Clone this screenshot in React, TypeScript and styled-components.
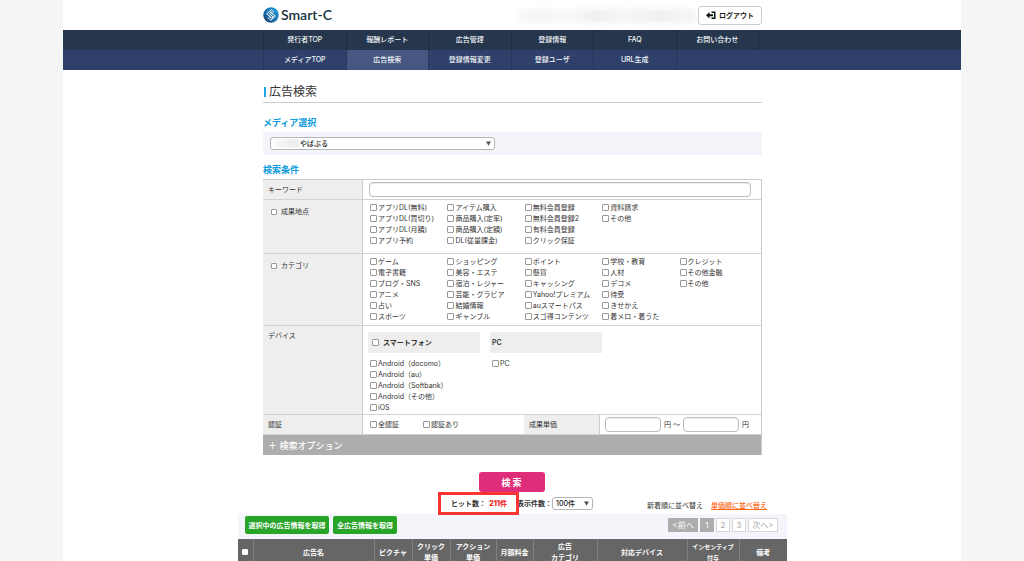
import React from "react";
import styled, { createGlobalStyle, css } from "styled-components";

const GlobalStyle = createGlobalStyle`
  *, *::before, *::after { box-sizing: border-box; }
  body {
    margin: 0;
    background: #f5f5f5;
    color: #333;
    font-family: Inter, "Noto Sans CJK JP", sans-serif;
    font-size: 7px;
    line-height: 11px;
  }
  button, input, select { font: inherit; color: inherit; margin: 0; }
  h1, h2, ul, fieldset { margin: 0; padding: 0; border: 0; min-width: 0; }
  ul { list-style: none; }
  a { color: inherit; text-decoration: none; }
`;

const Sheet = styled.div`
  max-width: 898px;
  min-height: 100vh;
  margin: 0 auto;
  background: #fff;
`;

const Container = styled.div<{ $wide?: boolean }>`
  max-width: ${(p) => (p.$wide ? 550 : 500)}px;
  margin: 0 auto;
  padding-left: 1px;
`;

const HeaderBar = styled.header`
  display: flex;
  align-items: center;
  height: 30px;
`;

const Logo = styled.a`
  display: flex;
  align-items: center;
  gap: 2px;
  color: #17323f;
  font-family: Lato, sans-serif;
  font-size: 14px;
  font-weight: 600;
  line-height: 18px;
`;

const AccountName = styled.div`
  width: 182px;
  height: 14px;
  margin: 2px 2px 0 auto;
  background: linear-gradient(90deg, #fcfcfc, #f5f5f5 12%, #f8f8f8 30%, #f0f0f0 44%, #f5f5f5 62%, #f0f0f0 80%, #f6f6f6);
  filter: blur(2px);
`;

const LogoutButton = styled.button`
  display: flex;
  align-items: center;
  justify-content: center;
  gap: 3px;
  width: 64px;
  height: 19px;
  padding: 0;
  border: 1px solid #ccc;
  border-radius: 3px;
  background: #fff;
  color: #222;
  font-weight: 600;
`;

const NavBar = styled.nav<{ $sub?: boolean }>`
  background: ${(p) => (p.$sub ? "#2f416b" : "#25364d")};
`;

const NavList = styled.ul`
  display: grid;
  grid-template-columns: repeat(6, 1fr);
  margin-right: 4px;
`;

const NavItem = styled.li<{ $sub?: boolean; $active?: boolean; $last?: boolean }>`
  border-left: 1px solid ${(p) => (p.$sub ? "#25365c" : "#1b2a40")};
  background: ${(p) => (p.$active ? "#465781" : "transparent")};
  ${(p) =>
    p.$last &&
    css`
      box-shadow: 1px 0 0 ${p.$sub ? "#25365c" : "#1b2a40"};
    `}
`;

const NavLink = styled.a`
  display: block;
  color: #f4f6fa;
  font-weight: 500;
  line-height: 20px;
  text-align: center;
`;

const PageTitle = styled.h1`
  display: flex;
  align-items: center;
  gap: 3px;
  margin: 14px 0 13px;
  padding: 0 0 2px 1px;
  border-bottom: 1px solid #ccc;
  font-size: 12px;
  font-weight: 400;
  line-height: 16px;

  &::before {
    content: "";
    width: 2px;
    height: 10px;
    background: #1aa5e3;
  }
`;

const SectionTitle = styled.h2`
  margin-bottom: 3px;
  color: #0c9bdc;
  font-size: 9px;
  font-weight: 600;
  line-height: 13px;
`;

const MediaPanel = styled.div`
  margin-bottom: 8px;
  padding: 5px 7px;
  background: #f4f5fa;
`;

const SelectWrap = styled.span<{ $width: number }>`
  position: relative;
  display: block;
  width: ${(p) => p.$width}px;

  svg {
    position: absolute;
    top: 4px;
    right: 4px;
    pointer-events: none;
  }
`;

const Select = styled.select<{ $indent: number }>`
  appearance: none;
  display: block;
  width: 100%;
  height: 13px;
  padding: 0 10px 0 ${(p) => p.$indent}px;
  border: 1px solid #b5b5b5;
  border-radius: 3px;
  background: #fff;
  color: #222;
  font-weight: 500;
  line-height: 11px;
`;

const MaskedName = styled.span`
  position: absolute;
  top: 2px;
  left: 4px;
  width: 25px;
  height: 9px;
  background: linear-gradient(90deg, #f8f8f8, #ebebeb);
  filter: blur(1px);
`;

const Conditions = styled.form`
  border-top: 1px solid #ccc;
  border-right: 1px solid #ccc;
`;

const Row = styled.div`
  display: grid;
  grid-template-columns: 100px 1fr;
  border-bottom: 1px solid #d2d2d2;
`;

const HeadCell = styled.div<{ $pad?: number; $indent?: number }>`
  padding: ${(p) => p.$pad ?? 4}px 0 0 ${(p) => p.$indent ?? 5}px;
  border-right: 1px solid #ccc;
  background: #eee;
`;

const KeywordCell = styled.div`
  padding: 2px 10px 2px 6px;
`;

const TextInput = styled.input<{ $width?: string }>`
  display: block;
  width: ${(p) => p.$width ?? "100%"};
  height: 15px;
  padding: 0 4px;
  border: 1px solid #bdbdbd;
  border-radius: 4px;
  background: #fff;
  box-shadow: inset 0 1px 1px #eee;
`;

const OptionGrid = styled.fieldset<{ $bottom: number }>`
  display: grid;
  grid-template-columns: repeat(5, 1fr);
  padding: 2px 4px ${(p) => p.$bottom}px 7px;
`;

const CheckLabel = styled.label<{ $gap?: number; $bold?: boolean }>`
  display: flex;
  align-items: center;
  gap: ${(p) => p.$gap ?? 1}px;
  font-weight: ${(p) => (p.$bold ? 600 : 400)};
  white-space: nowrap;
`;

const Box = styled.input.attrs({ type: "checkbox" })<{ $small?: boolean }>`
  appearance: none;
  flex: none;
  width: ${(p) => (p.$small ? 6 : 7)}px;
  height: ${(p) => (p.$small ? 6 : 7)}px;
  border: 1px solid #999;
  border-radius: 1px;
  background: #fff;

  &:checked { background: #2b7de9; }
`;

const DeviceCell = styled.div`
  display: flex;
  gap: 10px;
  padding: 6px 5px 1px;
`;

const DeviceGroup = styled.fieldset`
  flex: 0 1 112px;
`;

const DeviceHead = styled.div<{ $indent: number }>`
  display: flex;
  align-items: center;
  height: 21px;
  margin-bottom: 5px;
  padding-left: ${(p) => p.$indent}px;
  background: #eee;
  font-weight: 600;
`;

const DeviceList = styled.div`
  padding-left: 2px;
`;

const ApprovalCell = styled.div`
  display: grid;
  grid-template-columns: 161px 76px 1fr;
`;

const InlineOptions = styled.fieldset`
  display: flex;
  align-items: center;
  padding-left: 7px;

  label { flex: 0 0 53px; }
`;

const PriceRange = styled.div`
  display: flex;
  align-items: center;
  gap: 3px;
  padding: 2px 0 2px 5px;
  white-space: nowrap;
`;

const MoreOptions = styled.button`
  display: block;
  width: 100%;
  height: 20px;
  padding: 0 5px;
  border: 0;
  background: #adadad;
  color: #fff;
  font-size: 9px;
  font-weight: 500;
  text-align: left;
`;

const SearchRow = styled.div`
  display: flex;
  justify-content: center;
  padding: 17px 2px 0 0;
`;

const SearchButton = styled.button`
  width: 66px;
  height: 20px;
  padding: 0;
  border: 0;
  border-radius: 3px;
  background: #de2e79;
  color: #fff;
  font-size: 9px;
  font-weight: 700;
`;

const ResultSummary = styled.div`
  display: flex;
  align-items: center;
  justify-content: flex-end;
  height: 22px;
  padding-right: 20px;
  font-weight: 600;
  white-space: nowrap;
`;

const HitCount = styled.div`
  position: relative;
  display: flex;
  justify-content: space-between;
  width: 56px;
  margin-right: 10px;

  strong { color: #f03232; }

  &::after {
    content: "";
    position: absolute;
    z-index: 1;
    inset: -6px -12px -6px -13px;
    border: 3px solid #fb3434;
  }
`;

const PerPage = styled.div`
  display: flex;
  align-items: center;
  margin-right: 54px;
`;

const SortLinks = styled.div`
  display: flex;
  gap: 8px;
  padding-top: 4px;
  font-weight: 400;

  a {
    color: #ff6414;
    font-weight: 500;
    text-decoration: underline;
  }
`;

const Toolbar = styled.div`
  display: flex;
  align-items: center;
  gap: 4px;
  height: 25px;
  padding: 0 9px 3px 7px;
  background: #f4f5fa;
`;

const FetchButton = styled.button<{ $width: number }>`
  width: ${(p) => p.$width}px;
  height: 18px;
  padding: 0;
  border: 0;
  border-radius: 2px;
  background: #28a428;
  color: #fff;
  font-weight: 700;
  white-space: nowrap;
`;

const Pager = styled.nav`
  display: flex;
  gap: 2px;
  margin-left: auto;
`;

const PageLink = styled.a<{ $filled?: boolean; $wide?: boolean }>`
  width: ${(p) => (p.$wide ? 30 : 14)}px;
  border: 1px solid ${(p) => (p.$filled ? "#adadad" : "#d6d6d6")};
  background: ${(p) => (p.$filled ? "#adadad" : "#fff")};
  color: ${(p) => (p.$filled ? "#fff" : "#aaa")};
  font-size: 8px;
  line-height: 12px;
  text-align: center;
  white-space: nowrap;
`;

const ResultTable = styled.table`
  width: 100%;
  table-layout: fixed;
  border-collapse: collapse;
  background: #666;
  color: #fff;
`;

const ColumnHead = styled.th<{ $width: number; $small?: boolean }>`
  width: ${(p) => p.$width}px;
  height: 26px;
  padding: 2px 0;
  font-size: ${(p) => (p.$small ? 6 : 7)}px;
  font-weight: 600;
  white-space: nowrap;

  & + & { border-left: 1px solid #808080; }

  input { display: block; margin: 0 auto; border-color: #fff; }
`;

const Arrow = () => (
  <svg width="5" height="5" viewBox="0 0 5 5" aria-hidden="true">
    <path d="M0 0.5h5L2.5 4.8z" fill="#555" />
  </svg>
);

const LogoMark = () => (
  <svg width="16" height="16" viewBox="0 0 32 32" aria-hidden="true">
    <defs>
      <linearGradient id="mark" x1="0" y1="1" x2="1" y2="0">
        <stop offset="0" stopColor="#123054" />
        <stop offset="0.4" stopColor="#1a6ca8" />
        <stop offset="1" stopColor="#1fa3e0" />
      </linearGradient>
    </defs>
    <circle cx="16" cy="16" r="15.5" fill="url(#mark)" />
    <g fill="none" stroke="#fff" strokeWidth="2" strokeLinejoin="round" strokeLinecap="round">
      <path d="M22 10.5 16.5 5.5 7.5 13.5 17.5 22 20.5 19.3" />
      <path d="M19.5 13 16.5 10.5 13 13.5 20.5 20" />
      <path d="M10 21.5 15.5 26.5 24.5 18.5 14.5 10" />
      <path d="M12.5 19 15.5 21.5" />
    </g>
  </svg>
);

const LogoutIcon = () => (
  <svg width="10" height="9" viewBox="0 0 20 18" aria-hidden="true">
    <path d="M0 8.500 7 2v4.500h7v4H7V15z" fill="#111" />
    <path d="M11 2.500h6.500v12H11" fill="none" stroke="#111" strokeWidth="3" />
  </svg>
);

const mainNav = ["発行者TOP", "報酬レポート", "広告管理", "登録情報", "FAQ", "お問い合わせ"];
const subNav = ["メディアTOP", "広告検索", "登録情報変更", "登録ユーザ", "URL生成"];

const resultPoints = [
  ["アプリDL(無料)", "アプリDL(買切り)", "アプリDL(月額)", "アプリ予約"],
  ["アイテム購入", "商品購入(定率)", "商品購入(定額)", "DL(従量課金)"],
  ["無料会員登録", "無料会員登録2", "有料会員登録", "クリック保証"],
  ["資料請求", "その他"],
];

const categories = [
  ["ゲーム", "電子書籍", "ブログ・SNS", "アニメ", "占い", "スポーツ"],
  ["ショッピング", "美容・エステ", "宿泊・レジャー", "芸能・グラビア", "結婚情報", "ギャンブル"],
  ["ポイント", "懸賞", "キャッシング", "Yahoo!プレミアム", "auスマートパス", "スゴ得コンテンツ"],
  ["学校・教育", "人材", "デコメ", "待受", "きせかえ", "着メロ・着うた"],
  ["クレジット", "その他金融", "その他"],
];

const smartphones = ["Android（docomo）", "Android（au）", "Android（Softbank）", "Android（その他）", "iOS"];

const columns: { lines: string[]; width: number; small?: boolean }[] = [
  { lines: ["広告名"], width: 121 },
  { lines: ["ピクチャ"], width: 38 },
  { lines: ["クリック", "単価"], width: 38 },
  { lines: ["アクション", "単価"], width: 46 },
  { lines: ["月額料金"], width: 37 },
  { lines: ["広告", "カテゴリ"], width: 64 },
  { lines: ["対応デバイス"], width: 90 },
  { lines: ["インセンティブ", "付与"], width: 52, small: true },
  { lines: ["備考"], width: 48 },
];

const Check = ({ text }: { text: string }) => (
  <CheckLabel>
    <Box />
    {text}
  </CheckLabel>
);

const Options = ({ groups, bottom, label }: { groups: string[][]; bottom: number; label: string }) => (
  <OptionGrid $bottom={bottom} aria-label={label}>
    {groups.map((group) => (
      <div key={group[0]}>
        {group.map((text) => (
          <Check key={text} text={text} />
        ))}
      </div>
    ))}
  </OptionGrid>
);

const Nav = ({ items, sub, active }: { items: string[]; sub?: boolean; active?: string }) => (
  <NavBar $sub={sub}>
    <Container>
      <NavList>
        {items.map((text, i) => (
          <NavItem key={text} $sub={sub} $active={text === active} $last={i === items.length - 1}>
            <NavLink href="#">{text}</NavLink>
          </NavItem>
        ))}
      </NavList>
    </Container>
  </NavBar>
);

export default function App() {
  return (
    <>
      <GlobalStyle />
      <Sheet>
        <Container>
          <HeaderBar>
            <Logo href="#">
              <LogoMark />
              Smart-C
            </Logo>
            <AccountName />
            <LogoutButton type="button">
              <LogoutIcon />
              ログアウト
            </LogoutButton>
          </HeaderBar>
        </Container>
        <Nav items={mainNav} />
        <Nav items={subNav} sub active="広告検索" />

        <main>
          <Container>
            <PageTitle>広告検索</PageTitle>
            <SectionTitle>メディア選択</SectionTitle>
            <MediaPanel>
              <SelectWrap $width={225}>
                <Select $indent={29} aria-label="メディア選択">
                  <option>やばぶる</option>
                </Select>
                <MaskedName />
                <Arrow />
              </SelectWrap>
            </MediaPanel>

            <SectionTitle>検索条件</SectionTitle>
            <Conditions onSubmit={(e) => e.preventDefault()}>
              <Row>
                <HeadCell>
                  <label htmlFor="keyword">キーワード</label>
                </HeadCell>
                <KeywordCell>
                  <TextInput id="keyword" type="text" />
                </KeywordCell>
              </Row>
              <Row>
                <HeadCell $pad={6} $indent={8}>
                  <CheckLabel $gap={4}>
                    <Box $small />
                    成果地点
                  </CheckLabel>
                </HeadCell>
                <Options groups={resultPoints} bottom={7} label="成果地点" />
              </Row>
              <Row>
                <HeadCell $pad={6} $indent={8}>
                  <CheckLabel $gap={4}>
                    <Box $small />
                    カテゴリ
                  </CheckLabel>
                </HeadCell>
                <Options groups={categories} bottom={3} label="カテゴリ" />
              </Row>
              <Row>
                <HeadCell>デバイス</HeadCell>
                <DeviceCell>
                  <DeviceGroup>
                    <DeviceHead $indent={4}>
                      <CheckLabel $gap={4} $bold>
                        <Box />
                        スマートフォン
                      </CheckLabel>
                    </DeviceHead>
                    <DeviceList>
                      {smartphones.map((text) => (
                        <Check key={text} text={text} />
                      ))}
                    </DeviceList>
                  </DeviceGroup>
                  <DeviceGroup>
                    <DeviceHead $indent={2}>PC</DeviceHead>
                    <DeviceList>
                      <Check text="PC" />
                    </DeviceList>
                  </DeviceGroup>
                </DeviceCell>
              </Row>
              <Row>
                <HeadCell>認証</HeadCell>
                <ApprovalCell>
                  <InlineOptions aria-label="認証">
                    <Check text="全認証" />
                    <Check text="認証あり" />
                  </InlineOptions>
                  <HeadCell>成果単価</HeadCell>
                  <PriceRange>
                    <TextInput type="text" $width="56px" aria-label="成果単価 下限" />
                    <span>円 ～</span>
                    <TextInput type="text" $width="56px" aria-label="成果単価 上限" />
                    <span>円</span>
                  </PriceRange>
                </ApprovalCell>
              </Row>
              <MoreOptions type="button">＋ 検索オプション</MoreOptions>
            </Conditions>
          </Container>

          <Container $wide>
            <SearchRow>
              <SearchButton type="button">検 索</SearchButton>
            </SearchRow>
            <ResultSummary>
              <HitCount>
                <span>ヒット数：</span>
                <strong>211件</strong>
              </HitCount>
              <PerPage>
                <label htmlFor="per-page">表示件数：</label>
                <SelectWrap $width={41}>
                  <Select id="per-page" $indent={3}>
                    <option>100件</option>
                  </Select>
                  <Arrow />
                </SelectWrap>
              </PerPage>
              <SortLinks>
                <span>新着順に並べ替え</span>
                <a href="#">単価順に並べ替え</a>
              </SortLinks>
            </ResultSummary>
            <Toolbar>
              <FetchButton type="button" $width={84}>選択中の広告情報を取得</FetchButton>
              <FetchButton type="button" $width={64}>全広告情報を取得</FetchButton>
              <Pager aria-label="ページ">
                <PageLink href="#" $filled $wide>&lt;前へ</PageLink>
                <PageLink href="#" $filled>1</PageLink>
                <PageLink href="#">2</PageLink>
                <PageLink href="#">3</PageLink>
                <PageLink href="#" $wide>次へ&gt;</PageLink>
              </Pager>
            </Toolbar>
            <ResultTable>
              <thead>
                <tr>
                  <ColumnHead $width={15}>
                    <Box $small aria-label="すべて選択" />
                  </ColumnHead>
                  {columns.map((col) => (
                    <ColumnHead key={col.lines[0]} $width={col.width} $small={col.small}>
                      {col.lines.map((line) => (
                        <div key={line}>{line}</div>
                      ))}
                    </ColumnHead>
                  ))}
                </tr>
              </thead>
            </ResultTable>
          </Container>
        </main>
      </Sheet>
    </>
  );
}
